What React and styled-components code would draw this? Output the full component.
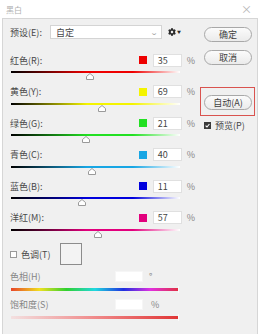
import styled, { createGlobalStyle } from "styled-components";
import { FaCog } from "react-icons/fa";

const Global = createGlobalStyle`
  body {
    margin: 0;
    background: #fff;
    font-family: "Noto Sans CJK SC", "Noto Sans", sans-serif;
  }
`;

const channels = [
  { label: "红色(R):", color: "#ee0000", value: 35 },
  { label: "黄色(Y):", color: "#f4f400", value: 69 },
  { label: "绿色(G):", color: "#22e022", value: 21 },
  { label: "青色(C):", color: "#18a6e4", value: 40 },
  { label: "蓝色(B):", color: "#0000dd", value: 11 },
  { label: "洋红(M):", color: "#e2007d", value: 57 },
];

const TRACK_W = 169;

const Window = styled.div`
  width: 260px;
  height: 334px;
  background: #fff;
  display: flex;
  flex-direction: column;
  overflow: hidden;
`;

const TitleBar = styled.div`
  height: 18px;
  flex: none;
  display: flex;
  align-items: center;
  justify-content: space-between;
  padding: 0 8px 0 6px;
  font-size: 8px;
  color: #b0b0b0;
`;

const Close = styled.span`
  font-size: 11px;
  color: #b4b4b4;
  line-height: 1;
`;

const Body = styled.div`
  flex: 1;
  display: flex;
  margin: 0 2px;
  background: #f0f0f0;
  border: 1px solid #d6d6d6;
  border-bottom: none;
  font-size: 9px;
  color: #484848;
`;

const LeftCol = styled.div`
  width: 197px;
  box-sizing: border-box;
  padding: 6px 0 0 7px;
`;

const PresetRow = styled.div`
  display: flex;
  align-items: center;
  height: 14px;
`;

const PresetLabel = styled.span`
  width: 40px;
`;

const Select = styled.div`
  width: 112px;
  height: 14px;
  box-sizing: border-box;
  background: #fff;
  border: 1px solid #d4d4d4;
  display: flex;
  align-items: center;
  justify-content: space-between;
  padding: 0 4px 0 5px;
`;

const Chevron = styled.span`
  color: #9a9a9a;
  font-size: 7px;
  transform: scaleX(1.4);
`;

const Gear = styled.div`
  margin-left: 6px;
  display: flex;
  align-items: center;
  gap: 1px;
  color: #2a2a2a;
  font-size: 4px;
`;

const ColorList = styled.div`
  margin-top: 14px;
`;

const ColorRow = styled.div`
  height: 31.6px;
`;

const Header = styled.div`
  width: 185px;
  height: ${(p) => p.$h || 14}px;
  display: flex;
  align-items: center;
  color: ${(p) => (p.$muted ? "#858585" : "#484848")};
`;

const Label = styled.span`
  flex: ${(p) => (p.$w ? "none" : 1)};
  width: ${(p) => (p.$w ? `${p.$w}px` : "auto")};
`;

const Swatch = styled.span`
  width: 8px;
  height: 8px;
  background: ${(p) => p.$c};
`;

const Field = styled.div`
  margin-left: ${(p) => (p.$plain ? 0 : 6)}px;
  width: ${(p) => (p.$plain ? 28 : 29)}px;
  height: ${(p) => (p.$plain ? 11 : 13)}px;
  box-sizing: border-box;
  background: #fff;
  border: 1px solid ${(p) => (p.$plain ? "#f6f6f6" : "#e0e0e0")};
  padding-left: 4px;
  display: flex;
  align-items: center;
  color: #444;
`;

const Unit = styled.span`
  margin-left: ${(p) => p.$ml || 5}px;
  color: #858585;
`;

const Track = styled.div`
  position: relative;
  margin: ${(p) => p.$mt || 4}px 0 0 1px;
  width: ${(p) => p.$w || TRACK_W}px;
  height: ${(p) => p.$h || 2}px;
  background: ${(p) => p.$bg};
`;

const Thumb = styled.svg`
  position: absolute;
  top: 2px;
  width: 8px;
  height: 7px;
`;

const EndTick = styled.span`
  position: absolute;
  right: 0;
  top: -2px;
  width: 1px;
  height: 7px;
  background: #fafafa;
`;

const ToneRow = styled.div`
  height: 23px;
  display: flex;
  align-items: center;
`;

const Check = styled.span`
  width: 7px;
  height: 7px;
  box-sizing: border-box;
  border: 1px solid ${(p) => (p.$on ? "#3a3a3a" : "#9a9a9a")};
  background: ${(p) => (p.$on ? "#3a3a3a" : "#fff")};
  display: flex;
  align-items: center;
  justify-content: center;
`;

const CheckLabel = styled.span`
  margin-left: ${(p) => p.$ml || 4}px;
`;

const ToneBox = styled.span`
  margin-left: 10px;
  width: 22px;
  height: 22px;
  box-sizing: border-box;
  border: 1px solid #8c8c8c;
  background: #f3f3f3;
`;

const RightCol = styled.div`
  flex: 1;
  padding-top: 8px;
`;

const Button = styled.div`
  margin: ${(p) => p.$mt || 0}px 0 0 ${(p) => (p.$inset ? 0 : 4)}px;
  width: 48px;
  height: 15px;
  box-sizing: border-box;
  border: 1px solid #a8a8a8;
  border-radius: 8px;
  background: linear-gradient(#fbfbfb, #ebebeb);
  display: flex;
  align-items: center;
  justify-content: center;
  color: #404040;
`;

const Highlight = styled.div`
  margin-top: 22px;
  width: 55px;
  box-sizing: border-box;
  border: 1px solid #d9534f;
  padding: 7px 0 5px 3px;
`;

const PreviewRow = styled.div`
  margin: 3px 0 0 4px;
  display: flex;
  align-items: center;
`;

function ChannelRow({ label, color, value }) {
  const pos = ((value + 200) / 500) * TRACK_W;
  return (
    <ColorRow>
      <Header>
        <Label>{label}</Label>
        <Swatch $c={color} />
        <Field>{value}</Field>
        <Unit>%</Unit>
      </Header>
      <Track $bg={`linear-gradient(to right, #000 0%, ${color} 45%, ${color} 72%, #fff 100%)`}>
        <Thumb viewBox="0 0 8 7" style={{ left: pos - 4 }}>
          <polygon points="4,0.5 7.5,3.5 7.5,6.5 0.5,6.5 0.5,3.5" fill="#fff" stroke="#9a9a9a" strokeWidth="1" />
        </Thumb>
      </Track>
    </ColorRow>
  );
}

export default function App() {
  return (
    <>
      <Global />
      <Window>
        <TitleBar>
          <span>黑白</span>
          <Close>×</Close>
        </TitleBar>
        <Body>
          <LeftCol>
            <PresetRow>
              <PresetLabel>预设(E):</PresetLabel>
              <Select>
                <span>自定</span>
                <Chevron>⌄</Chevron>
              </Select>
              <Gear>
                <FaCog size={8} />
                <span>▼</span>
              </Gear>
            </PresetRow>

            <ColorList>
              {channels.map((c) => (
                <ChannelRow key={c.label} {...c} />
              ))}
            </ColorList>

            <ToneRow>
              <Check />
              <CheckLabel>色调(T)</CheckLabel>
              <ToneBox />
            </ToneRow>

            <Header $h={12} $muted style={{ marginTop: 5 }}>
              <Label $w={105}>色相(H)</Label>
              <Field $plain />
              <Unit $ml={6}>°</Unit>
            </Header>
            <Track
              $mt={5}
              $h={3}
              $w={168}
              $bg="linear-gradient(to right, #e8452a, #f0e020 17%, #30d030 33%, #20d8e0 50%, #2030e0 67%, #e030e0 83%, #e03040)"
            >
              <EndTick />
            </Track>

            <Header $h={13} $muted style={{ marginTop: 7 }}>
              <Label $w={105}>饱和度(S)</Label>
              <Field $plain />
              <Unit $ml={8}>%</Unit>
            </Header>
            <Track $mt={5} $h={3} $w={168} $bg="linear-gradient(to right, #f3e0e0, #f08a8a 50%, #e03535)">
              <EndTick />
            </Track>
          </LeftCol>

          <RightCol>
            <Button>确定</Button>
            <Button $mt={8}>取消</Button>
            <Highlight>
              <Button $inset>自动(A)</Button>
            </Highlight>
            <PreviewRow>
              <Check $on>
                <svg width="5" height="5" viewBox="0 0 5 5">
                  <polyline points="0.6,2.6 2,4 4.4,1" fill="none" stroke="#fff" strokeWidth="1.1" />
                </svg>
              </Check>
              <CheckLabel $ml={4}>预览(P)</CheckLabel>
            </PreviewRow>
          </RightCol>
        </Body>
      </Window>
    </>
  );
}
